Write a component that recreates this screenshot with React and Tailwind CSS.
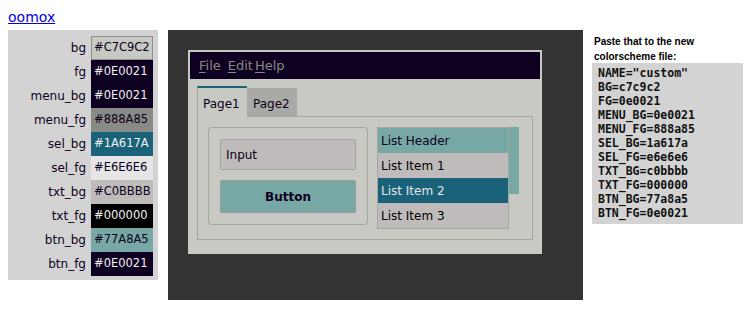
import React from 'react';

const colors = [
  { name: 'bg', value: '#C7C9C2', bg: 'bg-[#c7c9c2]', text: 'text-[#0e0021]', border: 'border-[#8f918c]' },
  { name: 'fg', value: '#0E0021', bg: 'bg-[#0e0021]', text: 'text-[#f2f2f2]', border: 'border-[#0e0021]' },
  { name: 'menu_bg', value: '#0E0021', bg: 'bg-[#0e0021]', text: 'text-[#f2f2f2]', border: 'border-[#0e0021]' },
  { name: 'menu_fg', value: '#888A85', bg: 'bg-[#888a85]', text: 'text-[#0e0021]', border: 'border-[#888a85]' },
  { name: 'sel_bg', value: '#1A617A', bg: 'bg-[#1a617a]', text: 'text-[#f2f2f2]', border: 'border-[#1a617a]' },
  { name: 'sel_fg', value: '#E6E6E6', bg: 'bg-[#e6e6e6]', text: 'text-[#0e0021]', border: 'border-[#e6e6e6]' },
  { name: 'txt_bg', value: '#C0BBBB', bg: 'bg-[#c0bbbb]', text: 'text-[#0e0021]', border: 'border-[#c0bbbb]' },
  { name: 'txt_fg', value: '#000000', bg: 'bg-[#000000]', text: 'text-[#f2f2f2]', border: 'border-[#000000]' },
  { name: 'btn_bg', value: '#77A8A5', bg: 'bg-[#77a8a5]', text: 'text-[#0e0021]', border: 'border-[#77a8a5]' },
  { name: 'btn_fg', value: '#0E0021', bg: 'bg-[#0e0021]', text: 'text-[#f2f2f2]', border: 'border-[#0e0021]' },
];

const exportLines = [
  'NAME="custom"',
  'BG=c7c9c2',
  'FG=0e0021',
  'MENU_BG=0e0021',
  'MENU_FG=888a85',
  'SEL_BG=1a617a',
  'SEL_FG=e6e6e6',
  'TXT_BG=c0bbbb',
  'TXT_FG=000000',
  'BTN_BG=77a8a5',
  'BTN_FG=0e0021',
];

const listItems = [
  { label: 'List Header', cls: 'bg-[#77a8a5] text-[#0e0021]' },
  { label: 'List Item 1', cls: 'bg-[#c0bbbb] text-black' },
  { label: 'List Item 2', cls: 'bg-[#1a617a] text-[#e6e6e6]' },
  { label: 'List Item 3', cls: 'bg-[#c0bbbb] text-black' },
];

function ColorTable() {
  return (
    <div className="w-[150px] shrink-0 bg-[#d3d3d3] pt-[6px] pb-[4px] pr-[5px]">
      {colors.map((c) => (
        <div key={c.name} className="flex h-[24px] items-center">
          <div className="w-[83px] pr-[5px] text-right text-[12px] text-[#0e0021]">{c.name}</div>
          <div
            className={`flex h-[24px] w-[62px] items-center border pl-[2px] text-[11.5px] ${c.bg} ${c.text} ${c.border}`}
          >
            {c.value}
          </div>
        </div>
      ))}
    </div>
  );
}

function MenuItem({ first, rest, className }) {
  return (
    <span className={className}>
      <span className="underline underline-offset-2">{first}</span>
      {rest}
    </span>
  );
}

function Preview() {
  return (
    <div className="ml-[10px] h-[270px] w-[415px] shrink-0 bg-[#333333] p-[20px]">
      <div className="h-[204px] w-[354px] bg-[#c7c9c2] p-[2px]">
        <div className="flex h-[27px] items-center bg-[#0e0021] pl-[9px] text-[13px] text-[#888a85]">
          <MenuItem first="F" rest="ile" />
          <MenuItem first="E" rest="dit" className="ml-[7px]" />
          <MenuItem first="H" rest="elp" className="ml-[2px]" />
        </div>

        <div className="pl-[7px] pt-[7px]">
          <div className="flex items-end text-[12px] leading-[14px] text-[#0e0021]">
            <div className="relative z-10 -mb-px h-[31px] w-[50px] border-l border-t-2 border-l-[#a3a59f] border-t-[#1a617a] bg-[#c7c9c2] pl-[5px] pt-[9px]">
              Page1
            </div>
            <div className="h-[28px] w-[50px] bg-[#a9aaa5] pl-[6px] pt-[9px]">Page2</div>
          </div>

          <div className="flex h-[124px] w-[336px] items-start border border-[#a3a59f] pl-[10px] pt-[10px]">
            <div className="h-[98px] w-[160px] rounded-[4px] border border-[#a3a59f] p-[11px]">
              <div className="flex h-[31px] items-center rounded-[2px] border border-[#a5a39f] bg-[#c0bbbb] pl-[5px] text-[12px] text-[#0e0021]">
                Input
              </div>
              <div className="mt-[10px] flex h-[33px] items-center justify-center rounded-[2px] border border-[#979b97] bg-[#77a8a5] text-[12px] font-bold text-[#0e0021]">
                Button
              </div>
            </div>

            <div className="ml-[9px] flex items-start">
              <div className="w-[132px] border border-[#a3a59f]">
                {listItems.map((it) => (
                  <div key={it.label} className={`flex h-[25px] items-center pl-[3px] text-[12px] ${it.cls}`}>
                    {it.label}
                  </div>
                ))}
              </div>
              <div className="h-[67px] w-[10px] bg-[#77a8a5]" />
            </div>
          </div>
        </div>
      </div>
    </div>
  );
}

function ExportPanel() {
  return (
    <div className="ml-[9px] w-[151px] shrink-0 pt-[4px]">
      <div className="pl-[2px] font-['Liberation_Sans',Arial,sans-serif] text-[10px] font-bold leading-[15px] text-black">
        Paste that to the new
        <br />
        colorscheme file:
      </div>
      <pre className="-mt-px bg-[#d3d3d3] pb-[4px] pl-[6px] pt-[3px] font-['DejaVu_Sans_Mono',monospace] text-[11.5px] font-bold leading-[14px] text-[#111]">
        {exportLines.join('\n')}
      </pre>
    </div>
  );
}

export default function App() {
  return (
    <div className="h-[311px] w-[754px] bg-white pl-[8px] font-['DejaVu_Sans',sans-serif]">
      <div className="h-[30px] pt-[9px] text-[14px] leading-[17px]">
        <a href="#" className="text-[#0000ee] underline">
          oomox
        </a>
      </div>
      <div className="flex items-start">
        <ColorTable />
        <Preview />
        <ExportPanel />
      </div>
    </div>
  );
}
